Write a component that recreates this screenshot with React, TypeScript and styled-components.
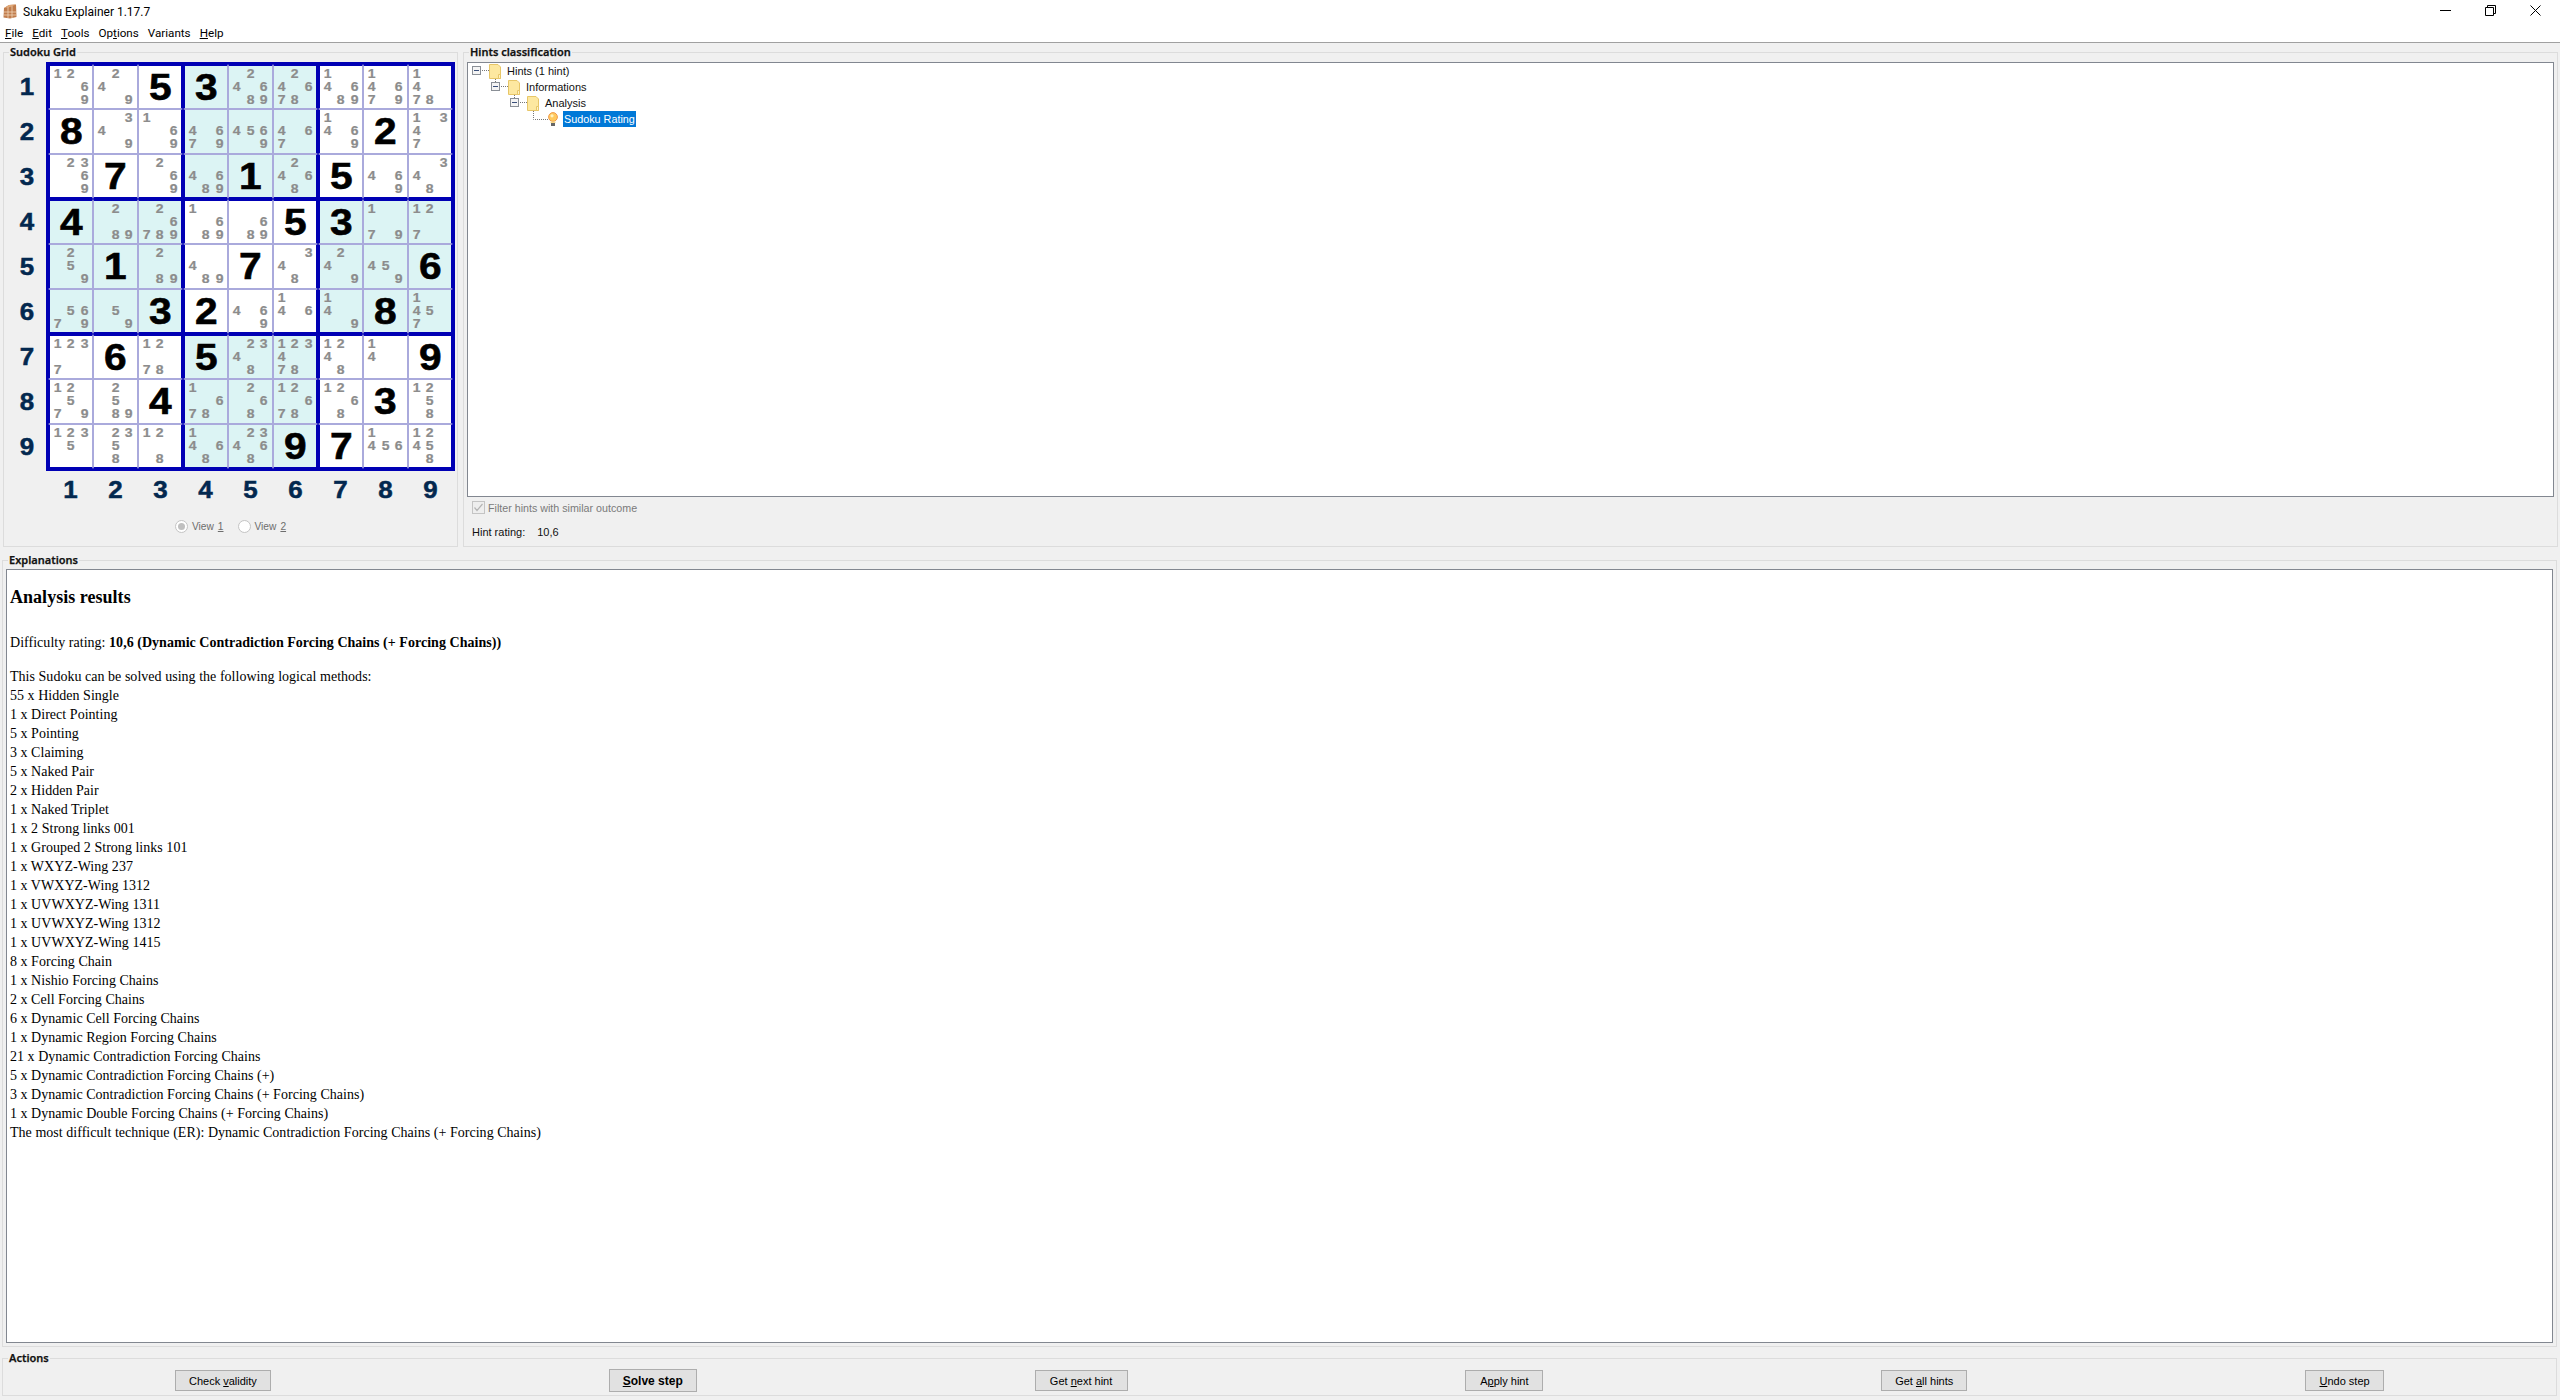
import React from 'react'
import styled, { createGlobalStyle } from 'styled-components'

const GlobalStyle = createGlobalStyle`
  html, body {
    margin: 0;
    padding: 0;
    background: #f0f0f0;
    overflow: hidden;
  }
  body {
    font-family: "Liberation Sans", Arial, sans-serif;
    font-size: 11px;
    color: #000;
  }
`
const Window = styled.div`
  width: 2560px;
  height: 1400px;
  display: flex;
  flex-direction: column;
  background: #f0f0f0;
  overflow: hidden;
`
const TitleBar = styled.div`
  height: 23px;
  flex: none;
  display: flex;
  align-items: center;
  background: #fff;
  padding-left: 3px;
  gap: 6px;
  font: 12px Roboto, sans-serif;
`
const TitleText = styled.span`
  flex: 1;
`
const WinControls = styled.div`
  display: flex;
  align-self: flex-start;
  padding-right: 2px;
`
const WinButton = styled.div`
  width: 45px;
  height: 21px;
  display: flex;
  align-items: center;
  justify-content: center;
`
const MenuBar = styled.div`
  height: 19px;
  flex: none;
  display: flex;
  align-items: center;
  padding-left: 5px;
  gap: 9px;
  background: #fff;
  border-bottom: 1px solid #a0a0a0;
  font: 11.65px Roboto, sans-serif;
`
const Key = styled.span`
  text-decoration: underline;
`
const Top = styled.div`
  height: 501px;
  flex: none;
  display: flex;
  padding: 3px 2px 0 3px;
  gap: 5px;
`
const Group = styled.fieldset<{ $w?: number }>`
  margin: 0;
  min-width: 0;
  padding: 0;
  border: 1px solid #dcdcdc;
  ${({ $w }) => ($w ? `width: ${$w}px; flex: none; box-sizing: border-box;` : 'flex: 1;')}
  display: flex;
  flex-direction: column;
`
const Legend = styled.legend`
  margin-left: 5px;
  padding: 0 1px;
  font: 600 11px/12px "Noto Sans", sans-serif;
  color: #111;
  -webkit-text-stroke: 0.25px #111;
`
const GridArea = styled.div`
  display: grid;
  grid-template-columns: 42px 409px;
  grid-template-rows: 409px 38px;
  margin-top: 4px;
`
const RowLabels = styled.div`
  display: grid;
  grid-template-rows: repeat(9, 45px);
  padding: 2px 0 0 4px;
`
const ColLabels = styled.div`
  grid-column: 2;
  display: grid;
  grid-template-columns: repeat(9, 45px);
  padding-left: 2px;
`
const AxisLabel = styled.div`
  display: flex;
  align-items: center;
  justify-content: center;
  font: bold 24px "Liberation Sans", Arial, sans-serif;
  color: #03284f;
  -webkit-text-stroke: 0.5px #03284f;
  transform: scaleX(1.08);
`
const Board = styled.div`
  width: 409px;
  height: 409px;
  box-sizing: border-box;
  border: 2px solid #0000b4;
  display: grid;
  grid-template-columns: repeat(9, 45px);
  grid-template-rows: repeat(9, 45px);
`
const Cell = styled.div<{ $shaded: boolean; $col: number; $row: number }>`
  box-sizing: border-box;
  background: ${({ $shaded }) => ($shaded ? '#dcf4f4' : '#fff')};
  border-style: solid;
  border-color: ${({ $col, $row }) =>
    `${$row % 3 === 0 ? '#0000b4' : '#aaaadc'} ${$col % 3 === 2 ? '#0000b4' : '#aaaadc'} ${$row % 3 === 2 ? '#0000b4' : '#aaaadc'} ${$col % 3 === 0 ? '#0000b4' : '#aaaadc'}`};
  border-width: ${({ $col, $row }) =>
    `${$row % 3 === 0 ? 2 : 1}px ${$col % 3 === 2 ? 2 : 1}px ${$row % 3 === 2 ? 2 : 1}px ${$col % 3 === 0 ? 2 : 1}px`};
  display: flex;
  align-items: center;
  justify-content: center;
`
const BigDigit = styled.div`
  font: bold 37px/1 "Liberation Sans", Arial, sans-serif;
  color: #000;
  -webkit-text-stroke: 0.6px #000;
  transform: scaleX(1.1);
`
const Candidates = styled.div`
  display: grid;
  grid-template-columns: repeat(3, 13.4px);
  grid-template-rows: repeat(3, 13px);
`
const Candidate = styled.div`
  display: flex;
  align-items: center;
  justify-content: center;
  font: bold 12.5px/1 "Liberation Sans", Arial, sans-serif;
  color: #8c8c8c;
  -webkit-text-stroke: 0.2px #8c8c8c;
  transform: scaleX(1.12);
`
const ViewRow = styled.div`
  display: flex;
  justify-content: center;
  gap: 14px;
  margin-top: 11px;
  font-size: 10.2px;
  color: #6d6d6d;
`
const Radio = styled.label`
  display: flex;
  align-items: center;
  gap: 4px;
`
const RadioMark = styled.span<{ $checked?: boolean }>`
  width: 13px;
  height: 13px;
  box-sizing: border-box;
  border-radius: 50%;
  border: 1px solid #c4c4c4;
  background: #fff;
  display: flex;
  align-items: center;
  justify-content: center;
  &::after {
    content: '';
    width: 7px;
    height: 7px;
    border-radius: 50%;
    background: ${({ $checked }) => ($checked ? '#c0c0c0' : 'transparent')};
  }
`
const HintBody = styled.div`
  flex: 1;
  display: flex;
  flex-direction: column;
  padding: 4px 3px 0 3px;
`
const TreeBox = styled.div`
  height: 435px;
  flex: none;
  box-sizing: border-box;
  background: #fff;
  border: 1px solid #828790;
  padding: 0 0 0 4px;
`
const TreeRow = styled.div<{ $depth: number }>`
  height: 16px;
  display: flex;
  align-items: center;
  padding-left: ${({ $depth }) => $depth * 19}px;
  color: #111;
`
const TreeLabel = styled.span`
  margin-left: 6px;
`
const Selected = styled.span`
  background: #0078d7;
  color: #fff;
  margin-left: 5px;
  padding: 0 1px;
  font-size: 10.8px;
  line-height: 16px;
`
const FilterRow = styled.div`
  display: flex;
  align-items: center;
  gap: 3px;
  margin-top: 2px;
  height: 17px;
  padding-left: 5px;
  font-size: 10.7px;
  color: #7a7a7a;
`
const RatingRow = styled.div`
  display: flex;
  gap: 12px;
  padding-left: 5px;
  margin-top: 10px;
  line-height: 13px;
  color: #111;
`
const Explain = styled.div`
  flex: 1;
  min-height: 0;
  display: flex;
  padding: 7px 3px 5px 2px;
`
const ExplainBody = styled.div`
  flex: 1;
  display: flex;
  padding: 3px;
`
const TextBox = styled.div`
  flex: 1;
  box-sizing: border-box;
  background: #fff;
  border: 1px solid #828790;
  padding: 17px 3px 0 3px;
  font: 14px/19px "Liberation Serif", "Times New Roman", serif;
  letter-spacing: 0.03px;
  color: #000;
`
const Heading = styled.h2`
  margin: 0 0 25px;
  font: bold 18px/21px "Liberation Serif", "Times New Roman", serif;
`
const Para = styled.p`
  margin: 0 0 15px;
`
const Line = styled.div``
const Actions = styled.div`
  height: 44px;
  flex: none;
  display: flex;
  padding: 0 3px 4px 2px;
`
const ButtonRow = styled.div`
  flex: 1;
  display: flex;
  justify-content: space-around;
  align-items: center;
  padding: 2px 3px 0;
`
const Button = styled.button<{ $primary?: boolean; $w: number }>`
  width: ${({ $w }) => $w}px;
  height: ${({ $primary }) => ($primary ? 23 : 21)}px;
  padding: 0;
  background: #e1e1e1;
  border: 1px solid #adadad;
  font-family: "Liberation Sans", Arial, sans-serif;
  font-size: ${({ $primary }) => ($primary ? 12 : 11)}px;
  font-weight: ${({ $primary }) => ($primary ? 700 : 400)};
  color: #000;
`

const grid: (number | number[])[][] = [
  [[1, 2, 6, 9], [2, 4, 9], 5, 3, [2, 4, 6, 8, 9], [2, 4, 6, 7, 8], [1, 4, 6, 8, 9], [1, 4, 6, 7, 9], [1, 4, 7, 8]],
  [8, [3, 4, 9], [1, 6, 9], [4, 6, 7, 9], [4, 5, 6, 9], [4, 6, 7], [1, 4, 6, 9], 2, [1, 3, 4, 7]],
  [[2, 3, 6, 9], 7, [2, 6, 9], [4, 6, 8, 9], 1, [2, 4, 6, 8], 5, [4, 6, 9], [3, 4, 8]],
  [4, [2, 8, 9], [2, 6, 7, 8, 9], [1, 6, 8, 9], [6, 8, 9], 5, 3, [1, 7, 9], [1, 2, 7]],
  [[2, 5, 9], 1, [2, 8, 9], [4, 8, 9], 7, [3, 4, 8], [2, 4, 9], [4, 5, 9], 6],
  [[5, 6, 7, 9], [5, 9], 3, 2, [4, 6, 9], [1, 4, 6], [1, 4, 9], 8, [1, 4, 5, 7]],
  [[1, 2, 3, 7], 6, [1, 2, 7, 8], 5, [2, 3, 4, 8], [1, 2, 3, 4, 7, 8], [1, 2, 4, 8], [1, 4], 9],
  [[1, 2, 5, 7, 9], [2, 5, 8, 9], 4, [1, 6, 7, 8], [2, 6, 8], [1, 2, 6, 7, 8], [1, 2, 6, 8], 3, [1, 2, 5, 8]],
  [[1, 2, 3, 5], [2, 3, 5, 8], [1, 2, 8], [1, 4, 6, 8], [2, 3, 4, 6, 8], 9, 7, [1, 4, 5, 6], [1, 2, 4, 5, 8]],
]

const methods = [
  '55 x Hidden Single',
  '1 x Direct Pointing',
  '5 x Pointing',
  '3 x Claiming',
  '5 x Naked Pair',
  '2 x Hidden Pair',
  '1 x Naked Triplet',
  '1 x 2 Strong links 001',
  '1 x Grouped 2 Strong links 101',
  '1 x WXYZ-Wing 237',
  '1 x VWXYZ-Wing 1312',
  '1 x UVWXYZ-Wing 1311',
  '1 x UVWXYZ-Wing 1312',
  '1 x UVWXYZ-Wing 1415',
  '8 x Forcing Chain',
  '1 x Nishio Forcing Chains',
  '2 x Cell Forcing Chains',
  '6 x Dynamic Cell Forcing Chains',
  '1 x Dynamic Region Forcing Chains',
  '21 x Dynamic Contradiction Forcing Chains',
  '5 x Dynamic Contradiction Forcing Chains (+)',
  '3 x Dynamic Contradiction Forcing Chains (+ Forcing Chains)',
  '1 x Dynamic Double Forcing Chains (+ Forcing Chains)',
  'The most difficult technique (ER): Dynamic Contradiction Forcing Chains (+ Forcing Chains)',
]

const digits = [1, 2, 3, 4, 5, 6, 7, 8, 9]

const AppIcon = () => (
  <svg width="14" height="15" viewBox="0 0 14 15">
    <path d="M1 4 L6 1 L13 0.5 L13.5 13 L7 14.5 L0.5 13.5 Z" fill="#c07c4c" />
    <path d="M1 4 L6 1 L13 0.5 L7 3 Z" fill="#e0a878" />
    <path d="M5 3 V14 M9 2 V14 M1 8 H13 M1 11 H13" stroke="#f0d4b8" strokeWidth="0.8" fill="none" />
  </svg>
)

const Expander = ({ up }: { up?: boolean }) => (
  <svg width="17" height="16" viewBox="0 0 17 16">
    {up && <path d="M4.5 0 V3" stroke="#777" strokeDasharray="1 1" />}
    <rect x="0.5" y="3.5" width="8" height="8" fill="#f4f4f4" stroke="#8a8f96" />
    <path d="M2 7.5 H7" stroke="#3a4f7a" />
    <path d="M10 7.5 H17" stroke="#777" strokeDasharray="1 1" />
  </svg>
)

const Elbow = () => (
  <svg width="19" height="16" viewBox="0 0 19 16">
    <path d="M4.5 0 V8.5 H19" stroke="#777" strokeDasharray="1 1" fill="none" />
  </svg>
)

const Folder = () => (
  <svg width="12" height="15" viewBox="0 0 12 15">
    <path d="M0.5 0.5 H9 L11.5 3 V14.5 H0.5 Z" fill="#fde8a0" stroke="#e7c668" />
    <path d="M9.5 10.5 H11.5 V14.5 H9.5 Z" fill="#fff3c4" stroke="#e7c668" />
  </svg>
)

const Bulb = () => (
  <svg width="10" height="15" viewBox="0 0 10 15">
    <circle cx="5" cy="5" r="4.4" fill="#ffc95e" stroke="#f09a4a" />
    <circle cx="4" cy="3.8" r="1.6" fill="#fff2c0" />
    <rect x="2.5" y="9.5" width="5" height="1.5" fill="#f7d98a" />
    <rect x="3" y="11" width="4" height="3" fill="#666" />
  </svg>
)

const CheckMark = () => (
  <svg width="13" height="13" viewBox="0 0 13 13">
    <rect x="0.5" y="0.5" width="12" height="12" fill="#eeeeee" stroke="#c4c4c4" />
    <path d="M2.5 6.5 L5 9.5 L10.5 3" stroke="#b4b4b4" strokeWidth="1.2" fill="none" />
  </svg>
)

export default function App() {
  return (
    <Window>
      <GlobalStyle />
      <TitleBar>
        <AppIcon />
        <TitleText>Sukaku Explainer 1.17.7</TitleText>
        <WinControls>
          <WinButton>
            <svg width="11" height="11" viewBox="0 0 11 11"><path d="M0 5.5 H11" stroke="#000" /></svg>
          </WinButton>
          <WinButton>
            <svg width="11" height="11" viewBox="0 0 11 11"><path d="M0.5 2.5 H8.5 V10.5 H0.5 Z M2.5 2.5 V0.5 H10.5 V8.5 H8.5" stroke="#000" fill="none" /></svg>
          </WinButton>
          <WinButton>
            <svg width="11" height="11" viewBox="0 0 11 11"><path d="M0.5 0.5 L10.5 10.5 M10.5 0.5 L0.5 10.5" stroke="#000" /></svg>
          </WinButton>
        </WinControls>
      </TitleBar>
      <MenuBar>
        <span><Key>F</Key>ile</span>
        <span><Key>E</Key>dit</span>
        <span><Key>T</Key>ools</span>
        <span>Op<Key>t</Key>ions</span>
        <span>Variants</span>
        <span><Key>H</Key>elp</span>
      </MenuBar>
      <Top>
        <Group $w={455}>
          <Legend>Sudoku Grid</Legend>
          <GridArea>
            <RowLabels>
              {digits.map((d) => <AxisLabel key={d}>{d}</AxisLabel>)}
            </RowLabels>
            <Board>
              {grid.map((row, r) =>
                row.map((value, c) => (
                  <Cell key={`${r}-${c}`} $row={r} $col={c} $shaded={(Math.floor(r / 3) + Math.floor(c / 3)) % 2 === 1}>
                    {typeof value === 'number' ? (
                      <BigDigit>{value}</BigDigit>
                    ) : (
                      <Candidates>
                        {digits.map((d) => <Candidate key={d}>{value.includes(d) ? d : ''}</Candidate>)}
                      </Candidates>
                    )}
                  </Cell>
                )),
              )}
            </Board>
            <ColLabels>
              {digits.map((d) => <AxisLabel key={d}>{d}</AxisLabel>)}
            </ColLabels>
          </GridArea>
          <ViewRow>
            <Radio><RadioMark $checked />View <Key>1</Key></Radio>
            <Radio><RadioMark />View <Key>2</Key></Radio>
          </ViewRow>
        </Group>
        <Group>
          <Legend>Hints classification</Legend>
          <HintBody>
            <TreeBox>
              <TreeRow $depth={0}><Expander /><Folder /><TreeLabel>Hints (1 hint)</TreeLabel></TreeRow>
              <TreeRow $depth={1}><Expander up /><Folder /><TreeLabel>Informations</TreeLabel></TreeRow>
              <TreeRow $depth={2}><Expander up /><Folder /><TreeLabel>Analysis</TreeLabel></TreeRow>
              <TreeRow $depth={3}><Elbow /><Bulb /><Selected>Sudoku Rating</Selected></TreeRow>
            </TreeBox>
            <FilterRow><CheckMark />Filter hints with similar outcome</FilterRow>
            <RatingRow><span>Hint rating:</span><span>10,6</span></RatingRow>
          </HintBody>
        </Group>
      </Top>
      <Explain>
        <Group>
          <Legend>Explanations</Legend>
          <ExplainBody>
            <TextBox>
              <Heading>Analysis results</Heading>
              <Para>Difficulty rating: <b>10,6 (Dynamic Contradiction Forcing Chains (+ Forcing Chains))</b></Para>
              <Line>This Sudoku can be solved using the following logical methods:</Line>
              {methods.map((m) => <Line key={m}>{m}</Line>)}
            </TextBox>
          </ExplainBody>
        </Group>
      </Explain>
      <Actions>
        <Group>
          <Legend>Actions</Legend>
          <ButtonRow>
            <Button $w={96}>Check <Key>v</Key>alidity</Button>
            <Button $primary $w={88}><Key>S</Key>olve step</Button>
            <Button $w={93}>Get <Key>n</Key>ext hint</Button>
            <Button $w={78}>A<Key>p</Key>ply hint</Button>
            <Button $w={86}>Get <Key>a</Key>ll hints</Button>
            <Button $w={79}><Key>U</Key>ndo step</Button>
          </ButtonRow>
        </Group>
      </Actions>
    </Window>
  )
}
